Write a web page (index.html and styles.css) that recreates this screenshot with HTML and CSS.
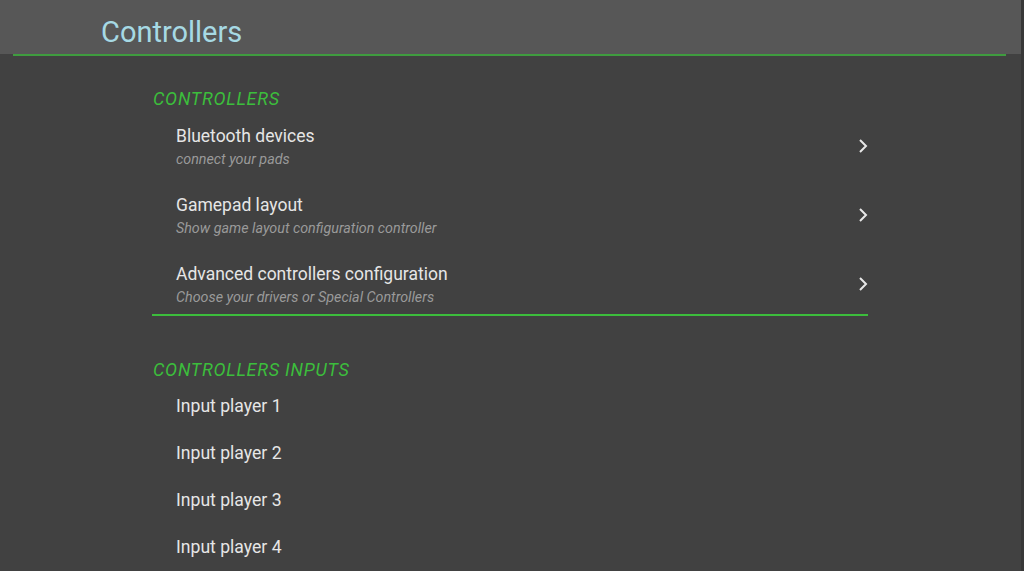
FILE: index.html
```html
<!DOCTYPE html>
<html>
<head lang="en">
    <meta charset="UTF-8">
    <title>Controllers</title>
    <link rel="stylesheet" href="styles.css">
</head>
<body>
    <div id="header">
        <h1 class="title">Controllers</h1>
    </div>
    <div class="header-line"></div>

    <div id="content">
        <h2 class="section-title">CONTROLLERS</h2>
        <ul class="menu">
            <li class="entry">
                <div class="entry-text">
                    <div class="entry-name">Bluetooth devices</div>
                    <div class="entry-help">connect your pads</div>
                </div>
                <svg class="chevron" width="10" height="16" viewBox="0 0 10 16"><path d="M2 2 L8 8 L2 14" fill="none" stroke="#e8e8e8" stroke-width="2"/></svg>
            </li>
            <li class="entry">
                <div class="entry-text">
                    <div class="entry-name">Gamepad layout</div>
                    <div class="entry-help">Show game layout configuration controller</div>
                </div>
                <svg class="chevron" width="10" height="16" viewBox="0 0 10 16"><path d="M2 2 L8 8 L2 14" fill="none" stroke="#e8e8e8" stroke-width="2"/></svg>
            </li>
            <li class="entry selected">
                <div class="entry-text">
                    <div class="entry-name">Advanced controllers configuration</div>
                    <div class="entry-help">Choose your drivers or Special Controllers</div>
                </div>
                <svg class="chevron" width="10" height="16" viewBox="0 0 10 16"><path d="M2 2 L8 8 L2 14" fill="none" stroke="#e8e8e8" stroke-width="2"/></svg>
            </li>
        </ul>

        <h2 class="section-title second">CONTROLLERS INPUTS</h2>
        <ul class="inputs">
            <li>Input player 1</li>
            <li>Input player 2</li>
            <li>Input player 3</li>
            <li>Input player 4</li>
        </ul>
    </div>
</body>
</html>
```

FILE: styles.css
```css
*{
    padding:0;
    margin:0;
}
ul{
    list-style: none;
}
body{
    background: #414141;
    font-family: Roboto, "Liberation Sans", sans-serif;
    height: 571px;
    overflow: hidden;
    border-right: 3px solid #383838;
}
#header{
    height: 54px;
    background: #575757;
    padding-left: 101px;
}
#header .title{
    font-size: 29px;
    font-weight: normal;
    color: #a6d9e4;
    line-height: 64px;
}
.header-line{
    height: 2px;
    background: #3f9c3f;
    margin: 0 15px 0 13px;
}
#content{
    margin-left: 152px;
    width: 716px;
    padding-top: 33px;
}
.section-title{
    font-size: 18px;
    font-weight: normal;
    font-style: italic;
    color: #3cbd3c;
    line-height: 20px;
    padding-left: 1px;
    letter-spacing: 0.75px;
}
.menu{
    margin-top: 5px;
}
.entry{
    display: flex;
    align-items: center;
    padding: 11px 0 9px 24px;
    border-bottom: 2px solid transparent;
    margin-bottom: 5px;
}
.entry.selected{
    border-bottom-color: #3cbd3c;
}
.entry-text{
    flex: 1;
}
.entry-name{
    font-size: 17.5px;
    line-height: 22px;
    color: #e6e6e6;
}
.entry-help{
    font-size: 14.3px;
    font-style: italic;
    line-height: 16px;
    margin-top: 4px;
    color: #9a9a9a;
}
.chevron{
    margin-right: 0;
}
.section-title.second{
    margin-top: 44px;
}
.inputs{
    margin-top: 3px;
}
.inputs li{
    padding-left: 24px;
    font-size: 17.6px;
    line-height: 47px;
    color: #e6e6e6;
}
```
